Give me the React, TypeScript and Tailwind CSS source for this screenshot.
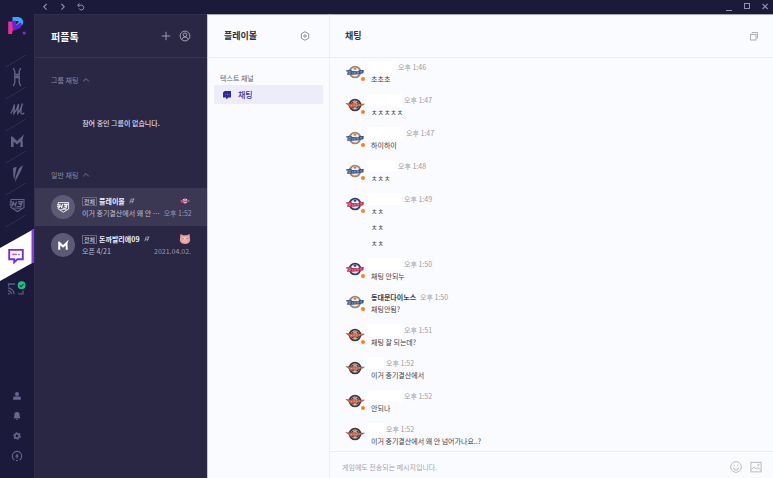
import { useState } from 'react';
import type { ReactNode } from 'react';
import clsx from 'clsx';

type Team = 'dinos' | 'eagles' | 'giants';

interface Message {
  team: Team;
  name?: string;
  nameWidth?: string;
  time: string;
  lines: string[];
  online: boolean;
}

const TEAM_COLORS: Record<Team, { ring: string; inner: string; band: string; edge: string }> = {
  dinos: { ring: '#a98668', inner: '#f0ece8', band: '#34578c', edge: '#34578c' },
  eagles: { ring: '#43393a', inner: '#d9d2d0', band: '#d9603f', edge: '#6b4a42' },
  giants: { ring: '#2c3f72', inner: '#eceef5', band: '#c22c50', edge: '#c22c50' },
};

const MESSAGES: Message[] = [
  { team: 'dinos', nameWidth: 'w-[29px]', time: '오후 1:46', lines: ['초초초'], online: true },
  { team: 'eagles', nameWidth: 'w-[35px]', time: '오후 1:47', lines: ['ㅊㅊㅊㅊㅊ'], online: true },
  { team: 'dinos', nameWidth: 'w-[37px]', time: '오후 1:47', lines: ['하이하이'], online: true },
  { team: 'dinos', nameWidth: 'w-[29px]', time: '오후 1:48', lines: ['ㅊㅊㅊ'], online: true },
  { team: 'giants', nameWidth: 'w-[35px]', time: '오후 1:49', lines: ['ㅊㅊ', 'ㅊㅊ', 'ㅊㅊ'], online: true },
  { team: 'giants', nameWidth: 'w-[35px]', time: '오후 1:50', lines: ['채팅 안되누'], online: true },
  { team: 'dinos', name: '동대문다이노스', time: '오후 1:50', lines: ['채팅안됨?'], online: true },
  { team: 'eagles', nameWidth: 'w-[35px]', time: '오후 1:51', lines: ['채팅 잘 되는데?'], online: true },
  { team: 'eagles', nameWidth: 'w-[17px]', time: '오후 1:52', lines: ['이거 중기결산에서'], online: false },
  { team: 'eagles', nameWidth: 'w-[35px]', time: '오후 1:52', lines: ['안되나'], online: true },
  {
    team: 'eagles',
    nameWidth: 'w-[17px]',
    time: '오후 1:52',
    lines: ['이거 중기결산에서 왜 안 넘어가나요..?'],
    online: false,
  },
];

function TeamLogo({ team, className }: { team: Team; className: string }) {
  const c = TEAM_COLORS[team];
  return (
    <svg viewBox="0 0 20 14" className={className} aria-hidden="true">
      <circle cx="10" cy="7" r="5.4" fill={c.inner} stroke={c.ring} strokeWidth="1.9" />
      {team === 'eagles' ? (
        <>
          <circle cx="10" cy="7" r="3.4" fill="none" stroke={c.ring} strokeWidth="1.2" />
          <path d="M0.8 5.4 L6 5.8 L8 5.2 L13 6 L19.4 6 L17 7.6 L12.5 8.2 L8 9.2 L5 9.4 L4 7.6 Z" fill={c.band} stroke={c.edge} strokeWidth="0.4" />
          <path d="M5.6 7.8l1.4-.4M8.4 7.4l1.3-.3M11 7.2h1.4M13.8 6.9h1.2" stroke="#f3c2b0" strokeWidth="0.7" />
          <path d="M8 3.9h4M8.4 10.6h3.2" stroke="#f1edec" strokeWidth="0.8" />
        </>
      ) : (
        <>
          <path d="M1.2 5.2 L6.2 4.8 L7 6 L13 6.2 L14.5 5 L18.8 5 L18.4 8.2 L14 9.2 L7 9.8 L2 9.8 L2.8 6.6 L1.2 6.4 Z" fill={c.band} />
          <path
            d="M4 8.8 V6.2 Q6 6.2 5.8 7.4 Q5.6 8.8 4 8.8 M7.6 7.2 V8.8 M9.2 8.8 V7.4 Q10.6 7 10.6 8.6 M12.2 7.6 a0.7 0.7 0 1 0 1.4 0 a0.7 0.7 0 1 0 -1.4 0 M17 6.2 Q15.2 6.2 15.6 6.9 Q17.2 7.2 15.4 8"
            fill="none"
            stroke={team === 'dinos' ? '#b4c1d8' : '#efbccb'}
            strokeWidth="0.5"
          />
          <path d="M8.2 3.8 L10 2.6 L11.8 3.8 L10 5 Z" fill={c.ring} />
        </>
      )}
    </svg>
  );
}

function LionMark() {
  return (
    <>
      <path d="M4 4.5h13v8L10.5 16.5 4 12.5z" fill="none" stroke="currentColor" strokeWidth="1.1" />
      <path d="M6.5 6.5 5 11.5M9.5 6.5 8 11.5M5.5 9h3.5M11 6.7h4.4l-1.2 2h-2.6l2.8 1-.8 1.9H9.6" fill="none" stroke="currentColor" strokeWidth="1.4" />
      <path d="M2.5 7h3M2.5 9.4h2M6.5 13.2h8" stroke="currentColor" strokeWidth="0.9" />
    </>
  );
}

function WingedM() {
  return <path d="M4 5.5 L5.5 5.5 L10 10 L17 3.5 L15.5 8.5 L16 16 H13.4 V10.5 L10 13.4 L6.6 10.5 V16 H4 Z" fill="currentColor" />;
}

const GAMES: { label: string; icon: ReactNode }[] = [
  {
    label: '리니지',
    icon: (
      <path
        d="M6.3 1 L7.8 4.5 V15.5 L6.3 19 M13.7 1 L12.2 4.5 V15.5 L13.7 19 M7.4 6 L12.6 10.4 M12.6 6 L7.4 10.4 M7.4 10.6h5.2"
        fill="none"
        stroke="currentColor"
        strokeWidth="1.3"
      />
    ),
  },
  {
    label: '리니지M',
    icon: (
      <path
        d="M3.8 14.5 C5.5 12 6.6 9 7.4 5.5 M7.4 5.5 C7.6 9 7 12 6.8 14.5 C9 12 10.6 9 11.6 5 C11.4 9 10.6 12 10.8 14.5 C13 12 14.6 8 15.4 4.5 C14.2 9 13.4 13 14.2 14.6 C15 15.6 16.4 14.8 17.2 13.6"
        fill="none"
        stroke="currentColor"
        strokeWidth="1.3"
      />
    ),
  },
  { label: '리니지2M', icon: <WingedM /> },
  {
    label: '블레이드',
    icon: <path d="M6 5 L9.6 3.8 L7.2 17 L6.4 13 Z M12 5.5 L16 2 L14.4 7 L8 19 L8.6 14 Z" fill="currentColor" />,
  },
  { label: '프로야구 H3', icon: <LionMark /> },
];

function Caret() {
  return (
    <svg viewBox="0 0 8 6" className="h-1.5 w-2" fill="none" stroke="currentColor" strokeWidth="0.8">
      <path d="M1.2 4.4 4 1.6l2.8 2.8" />
    </svg>
  );
}

function TitleBar() {
  return (
    <header className="flex h-3.5 shrink-0 items-center justify-between bg-[#1c1a3a] pr-[3px] pl-1.5 text-[#9391ab]">
      <div className="flex gap-2">
        <button aria-label="뒤로">
          <svg viewBox="0 0 10 10" className="size-2.5" fill="none" stroke="currentColor" strokeWidth="1.1">
            <path d="M6.6 2 3.8 4.8l2.8 2.8" />
          </svg>
        </button>
        <button aria-label="앞으로">
          <svg viewBox="0 0 10 10" className="size-2.5" fill="none" stroke="currentColor" strokeWidth="1.1">
            <path d="M3.4 2 6.2 4.8 3.4 7.6" />
          </svg>
        </button>
        <button aria-label="새로고침">
          <svg viewBox="0 0 10 10" className="size-2.5" fill="none" stroke="currentColor" strokeWidth="1">
            <path d="M2 3.2h3.6a2.4 2.4 0 1 1-2.5 3.2M3.4 1.4 1.6 3.2 3.4 5" />
          </svg>
        </button>
      </div>
      <div className="flex gap-2">
        <button aria-label="최소화">
          <svg viewBox="0 0 10 10" className="size-2.5" stroke="currentColor">
            <path d="M2 8.5h6" />
          </svg>
        </button>
        <button aria-label="최대화">
          <svg viewBox="0 0 10 10" className="size-2.5" fill="none" stroke="currentColor">
            <rect x="2.5" y="1.5" width="5" height="5" />
          </svg>
        </button>
        <button aria-label="닫기">
          <svg viewBox="0 0 10 10" className="size-2.5" stroke="currentColor" strokeWidth="1.1">
            <path d="M2.5 1.8l5.2 5.2M7.7 1.8 2.5 7" />
          </svg>
        </button>
      </div>
    </header>
  );
}

function Divider() {
  return (
    <svg viewBox="0 0 34 12" className="h-3 w-full shrink-0" stroke="#302e55" strokeWidth="1">
      <path d="M6 12 26 0" />
    </svg>
  );
}

function GameNav() {
  return (
    <nav className="flex w-[34px] shrink-0 flex-col bg-[#1c1a3a] text-[#656288]">
      <a href="#home" aria-label="퍼플" className="flex h-[55px] shrink-0 justify-center pt-4">
        <svg viewBox="0 0 20 20" className="size-5">
          <path d="M5.5 1H11a5.2 5.2 0 0 1 4.6 7.6L9 13V5H5.5z" fill="#38a8f8" />
          <path d="M1.2 5.4h5l3 2.5v5.5l-3.6 1.1L5 18H1.2z" fill="#e8309c" />
          <path d="M5 4.8h4v4.6l5-3.2a5 5 0 0 1-2 6.6L6 14.6z" fill="#6a1fd0" />
          <path d="M9 5h2.4v1.4L9 8.4z" fill="#1c1a3a" />
          <circle cx="17.2" cy="17" r="1.6" fill="#7d2ae0" />
        </svg>
      </a>
      {GAMES.map(game => (
        <div key={game.label} className="flex shrink-0 flex-col items-center">
          <Divider />
          <button aria-label={game.label}>
            <svg viewBox="0 0 20 20" className="size-5">
              {game.icon}
            </svg>
          </button>
        </div>
      ))}
      <Divider />
      <button aria-label="퍼플톡" className="mt-0.5 shrink-0">
        <svg viewBox="0 0 34 52" className="h-[52px] w-[34px]">
          <path d="M0 19 34 0v33L0 52z" fill="#fff" />
          <path d="M31.5 1.4 34 0v33l-2.5 1.4z" fill="#8a35f5" />
          <path d="M9.2 20.9h13.6v9.4h-5.4l-3.2 3v-3h-5z" fill="none" stroke="#7a2be8" strokeWidth="1.9" />
          <path d="M12.2 25.4h2.6" stroke="#e8309c" strokeWidth="1.5" />
          <path d="M14.8 25.4h2.4" stroke="#b06ae8" strokeWidth="1.5" />
          <path d="M18 25.4h1.8" stroke="#38b6e8" strokeWidth="1.5" />
        </svg>
      </button>
      <button aria-label="스트리밍" className="shrink-0 self-center">
        <svg viewBox="0 0 20 16" className="h-4 w-5">
          <g fill="none" stroke="#5c5980" strokeWidth="1.3">
            <path d="M1.6 5.5V3H8M11 12.8h5V9.6" />
            <path d="M1 7a6 6 0 0 1 6 6.2M1 9.6a3.5 3.5 0 0 1 3.4 3.6" />
          </g>
          <circle cx="1.8" cy="12.6" r="0.9" fill="#5c5980" />
          <circle cx="14.6" cy="4.2" r="3.9" fill="#1dbf83" />
          <path d="m12.7 4.3 1.4 1.4L16.6 3" fill="none" stroke="#14413f" strokeWidth="1.1" />
        </svg>
      </button>
      <div className="mt-auto flex flex-col items-center pr-px pb-3 text-[#68658e]">
        <button aria-label="프로필" className="grid size-5 place-items-center">
          <svg viewBox="0 0 10 10" className="size-2.5" fill="currentColor">
            <circle cx="5" cy="3" r="2" />
            <path d="M1.2 8.8V7q0-1.4 1.6-1.4h4.4q1.6 0 1.6 1.4v1.8z" />
          </svg>
        </button>
        <button aria-label="알림" className="grid size-5 place-items-center">
          <svg viewBox="0 0 10 10" className="size-2.5" fill="currentColor">
            <path d="M5 1a2.6 2.6 0 0 1 2.6 2.8c0 1.8.3 2.4 1 3.4H1.4c.7-1 1-1.6 1-3.4A2.6 2.6 0 0 1 5 1zM3.8 7.8h2.4L5 9.2z" />
          </svg>
        </button>
        <button aria-label="설정" className="grid size-5 place-items-center">
          <svg viewBox="0 0 10 10" className="size-2.5" fill="none" stroke="currentColor">
            <circle cx="5" cy="5" r="2.2" strokeWidth="1.6" />
            <circle cx="5" cy="5" r="3.2" strokeWidth="1.2" strokeDasharray="1.68" />
          </svg>
        </button>
        <button aria-label="퍼플온" className="grid size-5 place-items-center">
          <svg viewBox="0 0 12 12" className="size-3" fill="none" stroke="currentColor">
            <path d="M3.4 10A4.7 4.7 0 1 1 8.6 10" strokeWidth="1.1" />
            <path d="M6 3.5 7.8 6.8H4.2z" fill="currentColor" stroke="none" />
            <path d="M6 6v2.6M5 10.6h2" />
          </svg>
        </button>
      </div>
    </nav>
  );
}

interface RoomProps {
  active?: boolean;
  mark: ReactNode;
  name: string;
  preview: string;
  time: string;
  badge: ReactNode;
}

function Room({ active, mark, name, preview, time, badge }: RoomProps) {
  return (
    <button
      className={clsx(
        'flex h-[38px] w-full items-center gap-[7px] px-4 text-left text-[7px] leading-3',
        active && 'bg-[#3a3852]'
      )}
    >
      <span className="grid size-6 shrink-0 place-items-center rounded-full bg-[#5c5a74] text-white">
        <svg viewBox="0 0 20 20" className="size-4">
          {mark}
        </svg>
      </span>
      <span className="min-w-0 flex-1">
        <span className="flex items-center">
          <span className="mr-0.5 border border-[#666480] px-px text-[6px] leading-[7px] text-[#d8d7e4]">전체</span>
          <span className="font-bold text-[#efeef8]">{name}</span>
          <svg viewBox="0 0 8 8" className="ml-1 size-1.5" stroke="#b3b1c6" fill="none">
            <path d="M1 7 3 1M4 7l2.4-6M2 4.4h4M3.4 1.4h3.8" strokeWidth="1" />
          </svg>
          <span className="ml-auto grid size-3 place-items-center">{badge}</span>
        </span>
        <span className="flex justify-between gap-1 text-[#c0bed2]">
          <span className="whitespace-nowrap">{preview}</span>
          <span className="shrink-0 text-[#9a98b0]">{time}</span>
        </span>
      </span>
    </button>
  );
}

function Sidebar() {
  return (
    <aside className="w-[173px] shrink-0 border-t border-l border-[#302e4b] bg-[#292743]">
      <div className="flex h-[43px] items-center border-b border-[#383650] px-4">
        <h1 className="text-[10px] font-bold text-white">퍼플톡</h1>
        <button aria-label="대화 추가" className="ml-auto text-[#aaa8bd]">
          <svg viewBox="0 0 10 10" className="size-2.5" stroke="currentColor" strokeWidth="0.9">
            <path d="M5 .8v8.4M.8 5h8.4" />
          </svg>
        </button>
        <button aria-label="친구" className="ml-2 text-[#aaa8bd]">
          <svg viewBox="0 0 12 12" className="size-3" fill="none" stroke="currentColor" strokeWidth="0.9">
            <circle cx="6" cy="6" r="4.9" />
            <circle cx="6" cy="4.8" r="1.8" />
            <path d="M2.8 9.6Q3.4 7 6 7t3.2 2.6" />
          </svg>
        </button>
      </div>
      <section className="pt-4 text-[7px] leading-3">
        <h2 className="px-4 text-[#8b89a0]">
          <button className="flex items-center gap-1">
            그룹 채팅
            <Caret />
          </button>
        </h2>
        <p className="mt-[31px] text-center font-medium text-[#dddce8]">참여 중인 그룹이 없습니다.</p>
      </section>
      <section className="pt-10 text-[7px] leading-3">
        <h2 className="px-4 pb-[7px] text-[#8b89a0]">
          <button className="flex items-center gap-1">
            일반 채팅
            <Caret />
          </button>
        </h2>
        <Room
          active
          mark={<LionMark />}
          name="플레이볼"
          preview="이거 중기결산에서 왜 안 ⋯"
          time="오후 1:52"
          badge={<TeamLogo team="giants" className="h-2 w-3" />}
        />
        <Room
          mark={<WingedM />}
          name="돈까발리에09"
          preview="오픈 4/21"
          time="2021.04.02."
          badge={
            <svg viewBox="0 0 12 12" className="size-3">
              <path d="M1.5 1 4 2.2h4L10.5 1l.7 6.5Q10 11 6 11T.8 7.5z" fill="#eaa09c" />
              <path d="M3 4.2h6v2H3z" fill="#f7c9b8" />
              <path d="M3.6 5.4h.9M7.6 5.4h.9" stroke="#683040" strokeWidth="1" />
              <ellipse cx="6" cy="7.8" rx="2" ry="1.3" fill="#f6c6c8" />
              <path d="M5.3 7.4v.8M6.7 7.4v.8" stroke="#b0505c" strokeWidth="0.5" />
            </svg>
          }
        />
      </section>
    </aside>
  );
}

function Channels() {
  return (
    <section className="w-[123px] shrink-0 border-t border-r border-l border-t-[#a9a8ba] border-r-[#ececf4] border-l-[#c9c8d6]">
      <div className="flex h-[43px] items-center justify-between border-b border-[#ececf4] pr-[19px] pl-4">
        <h2 className="text-[9px] font-bold text-[#33323d]">플레이볼</h2>
        <button aria-label="채널 설정" className="text-[#77767f]">
          <svg viewBox="0 0 10 10" className="size-2.5" fill="none" stroke="currentColor" strokeWidth="0.8">
            <path d="M5 .7 8.7 2.8v4.4L5 9.3 1.3 7.2V2.8z" />
            <circle cx="5" cy="5" r="1.2" />
          </svg>
        </button>
      </div>
      <div className="px-1.5 pt-[14px]">
        <h3 className="px-1.5 text-[7px] leading-3 text-[#66656f]">텍스트 채널</h3>
        <a href="#chat" className="mt-px flex h-[19px] items-center gap-1.5 bg-[#ecedf9] px-2 text-[8px] font-medium text-[#3a2fb0]">
          <svg viewBox="0 0 10 10" className="size-2.5">
            <path d="M2.6 1H9v6.4H6.4L4.2 9.4v-2H1V2.6z" fill="#3226a6" />
            <path d="M3.4 4.4h.9M5 4.4h1M6.7 4.4h.6" stroke="#9c94e4" strokeWidth="0.7" />
          </svg>
          채팅
        </a>
      </div>
    </section>
  );
}

function MessageItem({ message }: { message: Message }) {
  return (
    <li className="flex gap-1.5">
      <div className="relative h-5 w-5 shrink-0 pt-1">
        <TeamLogo team={message.team} className="h-3.5 w-5" />
        {message.online && <span className="absolute right-0 bottom-0 size-1 rounded-full bg-[#f5841f]" />}
      </div>
      <div className="min-w-0 flex-1">
        <div className="flex h-3 items-center">
          {message.name ? (
            <strong className="mr-1 text-[7px] font-bold text-[#3f3e48]">{message.name}</strong>
          ) : (
            <span className={clsx('-ml-1 mr-0.5 h-3 shrink-0 bg-white', message.nameWidth)} />
          )}
          <time className="text-[7px] text-[#9b9aa5]">{message.time}</time>
        </div>
        <div className="flex flex-col gap-1">
          {message.lines.map((line, i) => (
            <p key={i} className="text-[7px] leading-3 text-[#3f3e48]">
              {line}
            </p>
          ))}
        </div>
      </div>
    </li>
  );
}

function Chat() {
  const [text, setText] = useState('');

  return (
    <main className="flex min-w-0 flex-1 flex-col border-t border-[#a9a8ba]">
      <div className="flex h-[43px] shrink-0 items-center justify-between border-b border-[#ececf4] pr-[14px] pl-[15px]">
        <h2 className="text-[9px] font-bold text-[#33323d]">채팅</h2>
        <button aria-label="새 창" className="text-[#aeadb8]">
          <svg viewBox="0 0 10 10" className="size-2.5" fill="none" stroke="currentColor">
            <path d="M3 2.5V1.5h5.5V7h-1" />
            <rect x="1.5" y="3.5" width="5.5" height="5.5" />
          </svg>
        </button>
      </div>
      <ul className="flex min-h-0 flex-1 flex-col gap-[9px] overflow-hidden px-[15px] pt-[3px]">
        {MESSAGES.map((message, i) => (
          <MessageItem key={i} message={message} />
        ))}
      </ul>
      <form className="flex h-[27px] shrink-0 items-center gap-2 border-t border-[#ececf4] pt-1 pr-[11px] pl-3 text-[#b6b5c0]">
        <input
          value={text}
          onChange={e => setText(e.target.value)}
          aria-label="메시지"
          placeholder="게임에도 전송되는 메시지입니다."
          className="min-w-0 flex-1 text-[7px] text-[#3f3e48] outline-none placeholder:text-[#a5a4ae]"
        />
        <button type="button" aria-label="이모티콘">
          <svg viewBox="0 0 12 12" className="size-3" fill="none" stroke="currentColor" strokeWidth="0.9">
            <circle cx="6" cy="6" r="5.3" />
            <path d="M3.4 7a2.7 2.7 0 0 0 5.2 0M4.2 3.9v1.2M7.8 3.9v1.2" />
          </svg>
        </button>
        <button type="button" aria-label="사진">
          <svg viewBox="0 0 12 12" className="size-3" fill="none" stroke="currentColor" strokeWidth="0.9">
            <rect x="0.9" y="1.3" width="10.2" height="9.6" />
            <path d="m1 9 3-3 2.2 2.2L8 6.6l3 2.6" />
            <circle cx="8.4" cy="3.9" r="0.7" />
          </svg>
        </button>
      </form>
    </main>
  );
}

export default function App() {
  return (
    <div className="flex h-screen overflow-hidden bg-[#fafbff] font-['Noto_Sans_CJK_KR',sans-serif]">
      <GameNav />
      <div className="flex min-w-0 flex-1 flex-col">
        <TitleBar />
        <div className="flex min-h-0 flex-1">
          <Sidebar />
          <Channels />
          <Chat />
        </div>
      </div>
    </div>
  );
}
